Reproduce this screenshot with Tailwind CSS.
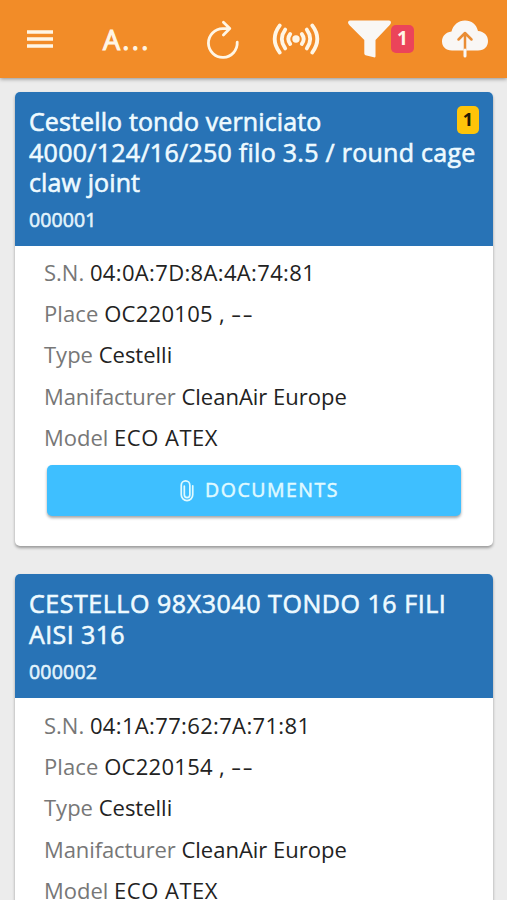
<!DOCTYPE html>
<html lang="en">
<head>
    <meta charset="UTF-8">
    <meta name="viewport" content="width=device-width, initial-scale=1.0">
    <title>Assets</title>
    <script src="https://cdn.jsdelivr.net/npm/@tailwindcss/browser@4"></script>
</head>
<body class="bg-[#ececec] h-[900px] overflow-hidden font-['Open_Sans','Noto_Sans',sans-serif]">
    <!-- Top bar -->
    <header class="relative h-[78px] bg-[#f28c28] flex items-center pl-[27px] pr-[19px] shadow-[0_1px_4px_rgba(0,0,0,0.4)] text-[#fff6e6]">
        <button class="shrink-0" aria-label="Menu">
            <svg class="block w-[26px] h-[20px]" viewBox="0 0 26 20" fill="none" stroke="currentColor" stroke-width="3.6">
                <path d="M0 3h26M0 10h26M0 17h26"/>
            </svg>
        </button>
        <h1 class="ml-[50px] w-[50px] text-[27px] leading-none tracking-[2.3px] whitespace-nowrap [-webkit-text-stroke:1.1px]">A...</h1>
        <div class="ml-auto flex items-center">
            <!-- Refresh -->
            <svg class="block w-[32px] h-[38px] overflow-visible" viewBox="0 0 32 38" fill="none" stroke="currentColor" stroke-width="2.8" stroke-linecap="round" stroke-linejoin="round">
                <path d="M30.2 22.2A14.4 14.4 0 1 1 15.8 8.6H22M16.4 2.2L22.8 8.6L16.4 15"/>
            </svg>
            <!-- Radio waves -->
            <svg class="block ml-[34px] w-[46px] h-[34px] overflow-visible" viewBox="0 0 46 34" fill="none" stroke="currentColor" stroke-width="3.8" stroke-linecap="round">
                <circle cx="23" cy="17" r="3.7" fill="currentColor" stroke="none"/>
                <path d="M17.2 12Q13.4 17 17.2 22M28.8 12Q32.6 17 28.8 22M12.2 7.6Q5.4 17 12.2 26.4M33.8 7.6Q40.600 17 33.8 26.4M6.800 3.4Q-3.400 17 6.800 30.600M39.200 3.400Q49.400 17 39.200 30.600"/>
            </svg>
            <!-- Filter -->
            <svg class="block ml-[29px] w-[43px] h-[38px] text-[#f9f7f5]" viewBox="0 0 43 38" fill="currentColor">
                <path d="M2 .5H41Q43 .5 43 2.5Q42.8 4 41.5 5.2L27.500 20V36.500Q27.300 37.700 25.800 37.300L17.500 35.200Q16.300 34.800 16.300 33.500V20L1.500 5.200Q0 3.700 0 2.200Q.3 .5 2 .5Z"/>
            </svg>
            <span class="w-[23px] h-[28px] rounded-[5px] bg-[#eb445a] text-[19px] leading-[27px] font-bold text-center">1</span>
            <!-- Upload -->
            <svg class="block ml-[28px] w-[46px] h-[38px] text-[#f9f7f5]" viewBox="0 0 46 38">
                <path fill="currentColor" d="M10 30.500C3.500 30.500 0 26.500 0 21.300C0 16 4 12.300 9.500 11.500C11 5 16.500 .5 23 .5C29.500 .5 34.500 4.500 36 11C42 11.500 46 15.300 46 21C46 26.500 42.500 30.500 36 30.500Z"/>
                <path fill="none" stroke="#e98d35" stroke-width="2.5" stroke-linecap="round" stroke-linejoin="round" d="M16.500 19.500L23 13L29.500 19.500M23 13V30"/>
                <path fill="none" stroke="currentColor" stroke-width="3" stroke-linecap="round" d="M23 30V36"/>
            </svg>
        </div>
    </header>

    <main class="pt-[14px] pl-[15px] pr-[14px] flex flex-col gap-[28px]">
        <article class="h-[454px] bg-white rounded-[5px] overflow-hidden shadow-[0_2px_3px_rgba(0,0,0,0.35)]">
            <div class="relative h-[154px] bg-[#2873b6] pt-[14px] pl-[14px] text-[#eefaff]">
                <h2 class="text-[25px] leading-[30.6px] whitespace-nowrap [-webkit-text-stroke:0.6px]">
                    <span class="block tracking-[0.12px]">Cestello tondo verniciato</span>
                    <span class="block tracking-[0.27px]">4000/124/16/250 filo 3.5 / round cage</span>
                    <span class="block tracking-[0.12px]">claw joint</span>
                </h2>
                <p class="mt-[9px] text-[19.5px] leading-[26px] tracking-[0.1px] text-[#e2f3fc] [-webkit-text-stroke:0.6px]">000001</p>
                <span class="absolute right-[14px] top-[14px] w-[22px] h-[28px] rounded-[5px] bg-[#ffc409] text-[18px] leading-[27px] font-bold text-center text-[#221a05]">1</span>
            </div>
            <div class="pt-[6px] pl-[29px] text-[22px] leading-[41.2px] text-[#222] whitespace-nowrap">
                <p><span class="text-[#777]">S.N.</span> <span class="tracking-[0.35px]">04:0A:7D:8A:4A:74:81</span></p>
                <p><span class="text-[#777] tracking-[0.1px]">Place</span> <span class="tracking-[0.3px]">OC220105 ,</span> <span class="inline-block origin-left scale-x-145 tracking-[0.8px]">--</span></p>
                <p><span class="text-[#777]">Type</span> <span>Cestelli</span></p>
                <p><span class="text-[#777] tracking-[-0.1px]">Manifacturer</span> <span>CleanAir Europe</span></p>
                <p><span class="text-[#777]">Model</span> <span class="tracking-[0.5px]">ECO ATEX</span></p>
            </div>
            <button class="ml-[32px] mt-[7px] w-[414px] h-[51px] rounded-[5px] bg-[#3ebfff] shadow-[0_2px_3px_rgba(0,0,0,0.35)] flex items-center justify-center gap-[11px] pl-[11px] text-[#e0faff]">
                <svg class="block w-[14px] h-[22px]" viewBox="0 0 14 23" fill="none" stroke="currentColor" stroke-width="1.8" stroke-linecap="round">
                    <path d="M13 6V15.5A6 6 0 0 1 1 15.5V5.5A4.5 4.5 0 0 1 10 5.5V15.5A2.9 2.9 0 0 1 4.2 15.5V6.5"/>
                </svg>
                <span class="pb-[2px] text-[19.5px] tracking-[1.5px] [-webkit-text-stroke:0.5px]">DOCUMENTS</span>
            </button>
        </article>

        <article class="h-[454px] shrink-0 bg-white rounded-[5px] overflow-hidden shadow-[0_2px_3px_rgba(0,0,0,0.35)]">
            <div class="h-[124px] bg-[#2873b6] pt-[14px] pl-[14px] text-[#eefaff]">
                <h2 class="text-[25px] leading-[30.6px] whitespace-nowrap [-webkit-text-stroke:0.6px]">
                    <span class="block tracking-[0.55px]">CESTELLO 98X3040 TONDO 16 FILI</span>
                    <span class="block tracking-[0.4px]">AISI 316</span>
                </h2>
                <p class="mt-[10px] text-[19.5px] leading-[26px] text-[#e2f3fc] tracking-[0.2px] [-webkit-text-stroke:0.6px]">000002</p>
            </div>
            <div class="pt-[7px] pl-[29px] text-[22px] leading-[41.2px] text-[#222] whitespace-nowrap">
                <p><span class="text-[#777]">S.N.</span> <span class="tracking-[0.35px]">04:1A:77:62:7A:71:81</span></p>
                <p><span class="text-[#777] tracking-[0.1px]">Place</span> <span class="tracking-[0.3px]">OC220154 ,</span> <span class="inline-block origin-left scale-x-145 tracking-[0.8px]">--</span></p>
                <p><span class="text-[#777]">Type</span> <span>Cestelli</span></p>
                <p><span class="text-[#777] tracking-[-0.1px]">Manifacturer</span> <span>CleanAir Europe</span></p>
                <p><span class="text-[#777]">Model</span> <span class="tracking-[0.5px]">ECO ATEX</span></p>
            </div>
        </article>
    </main>
</body>
</html>
